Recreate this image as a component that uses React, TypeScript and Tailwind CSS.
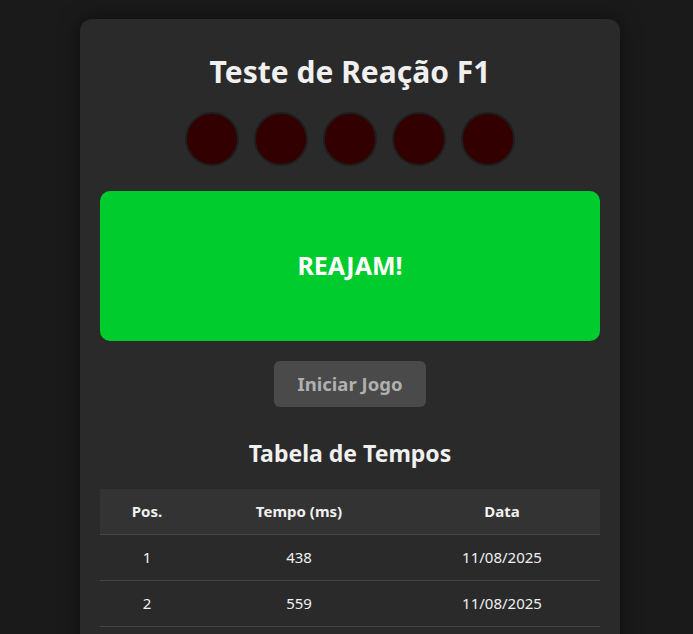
import React from "react";

const rows = [
  { pos: 1, tempo: 438, data: "11/08/2025" },
  { pos: 2, tempo: 559, data: "11/08/2025" },
];

function App() {
  return (
    <div
      className="min-h-[634px] bg-[#1a1a1a] pt-[19px] pl-[7px] flex justify-center text-[#f0f0f0]"
      style={{ fontFamily: '"Noto Sans", "Open Sans", sans-serif' }}
    >
      <div className="w-[540px] self-start bg-[#2a2a2a] rounded-[12px] shadow-[0_0_20px_rgba(0,0,0,0.5)] px-5 pt-[33px] pb-8 flex flex-col items-center">
        <h1 className="text-[30px] font-bold leading-[40px]">Teste de Reação F1</h1>
        <div className="flex gap-[15px] mt-[20px]">
          {[0, 1, 2, 3, 4].map((i) => (
            <div key={i} className="w-[54px] h-[54px] rounded-full bg-[#330000] border-2 border-[#1e1e1e]" />
          ))}
        </div>
        <div className="mt-[25px] w-full h-[150px] rounded-[10px] bg-[#00cc2e] flex items-center justify-center">
          <span className="text-[25px] font-bold text-white">REAJAM!</span>
        </div>
        <button className="mt-5 w-[152px] h-[46px] rounded-[6px] bg-[#4a4a4a] text-[#b0b0b0] text-[18.5px] font-bold">
          Iniciar Jogo
        </button>
        <h2 className="mt-[30px] text-[23px] font-bold leading-[32px]">Tabela de Tempos</h2>
        <table className="mt-[20px] w-full border-collapse text-center">
          <thead>
            <tr className="bg-[#333333] border-b border-[#444444]">
              <th className="w-[94px] h-[45px] text-[15px] font-bold">Pos.</th>
              <th className="w-[210px] h-[45px] text-[15px] font-bold">Tempo (ms)</th>
              <th className="h-[45px] text-[15px] font-bold">Data</th>
            </tr>
          </thead>
          <tbody>
            {rows.map((r) => (
              <tr key={r.pos} className="border-b border-[#444444]">
                <td className="h-[46px] text-[15px]">{r.pos}</td>
                <td className="h-[46px] text-[15px]">{r.tempo}</td>
                <td className="h-[46px] text-[15px]">{r.data}</td>
              </tr>
            ))}
          </tbody>
        </table>
      </div>
    </div>
  );
}

export default App;
